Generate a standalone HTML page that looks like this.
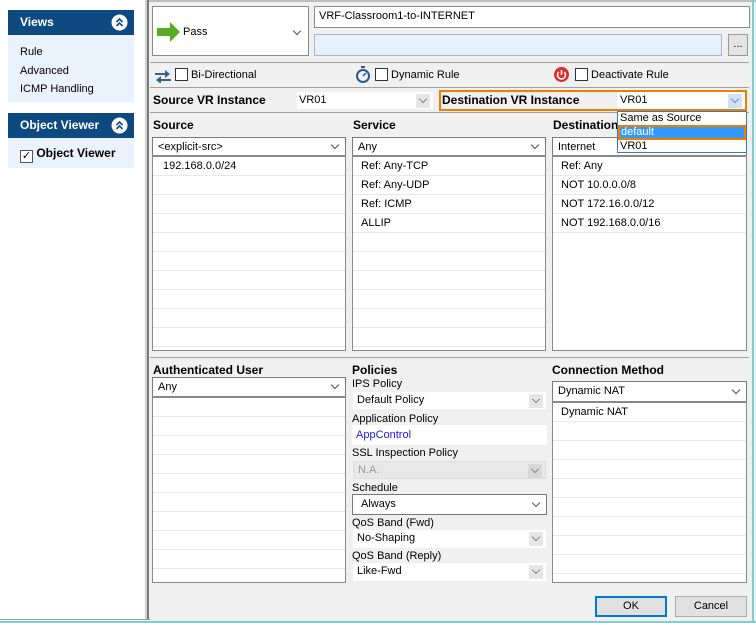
<!DOCTYPE html>
<html><head><meta charset="utf-8"><style>
*{box-sizing:border-box;margin:0;padding:0}
body{width:756px;height:623px;position:relative;overflow:hidden;background:#f0f0f0;font-family:"Liberation Sans",sans-serif;font-size:11px;color:#000}
.a{position:absolute}
.side{left:0;top:0;width:145px;height:623px;background:#fff}
.hd{background:#0e4a80;color:#fff;font-weight:bold;font-size:12px;padding-left:12px;line-height:25px}
.ci{position:absolute;right:6px;top:4px}
.bd{background:#eaf2fb}
.box{background:#fff;border:1px solid #8a8a8a}
.b{font-weight:bold;font-size:12px}
.cb{display:inline-block;width:13px;height:13px;border:1px solid #333;background:#fff;vertical-align:-3px}
.sel{background:#fff;border:1px solid #7a7a7a;padding-left:5px;line-height:17px}
.chev{position:absolute;right:7px;top:4px;width:6px;height:6px;border-right:1px solid #555;border-bottom:1px solid #555;transform:rotate(45deg)}
.list{background:#fff;border:1px solid #8a8a8a;border-top:2px solid #888;background-image:repeating-linear-gradient(#fff 0,#fff 18px,#e8e8e8 18px,#e8e8e8 19px)}
.list div{line-height:19px;padding-left:8px}
.hr{height:1px;background:#a0a0a0;left:150px;width:599px}
.lab{line-height:14px}
.fs{background:#fff;padding-left:4px;line-height:17px}
.dchev{position:absolute;right:3px;top:2px;width:14px;height:14px;background:#e6e6e6}
.dchev:after{content:"";position:absolute;left:4px;top:2px;width:5px;height:5px;border-right:1px solid #888;border-bottom:1px solid #888;transform:rotate(45deg)}
</style></head><body>
<div class="a" style="left:0;top:0;width:756px;height:2px;background:#bdbdbd"></div>
<div class="a side"></div>
<div class="a" style="left:145px;top:0;width:2px;height:620px;background:#cfcfcf"></div>
<div class="a" style="left:147px;top:0;width:2px;height:620px;background:#7a7a7a"></div>
<div class="a" style="left:8px;top:10px;width:126px"><div class="hd" style="position:relative">Views<svg class="ci" width="17" height="17"><circle cx="8.5" cy="8.5" r="8" fill="#fff"/><path d="M5.5 8l3-3 3 3M5.5 12l3-3 3 3" stroke="#0e4a80" stroke-width="1.6" fill="none"/></svg></div>
<div class="bd" style="height:67px;padding:8px 0 0 12px;line-height:18.5px">Rule<br>Advanced<br>ICMP Handling</div></div>
<div class="a" style="left:8px;top:113px;width:126px"><div class="hd" style="position:relative">Object Viewer<svg class="ci" width="17" height="17"><circle cx="8.5" cy="8.5" r="8" fill="#fff"/><path d="M5.5 8l3-3 3 3M5.5 12l3-3 3 3" stroke="#0e4a80" stroke-width="1.6" fill="none"/></svg></div>
<div class="bd" style="height:30px;padding:8px 0 0 12px;font-weight:bold;font-size:12px;line-height:14px"><span class="cb" style="border-color:#555;font-size:11px;line-height:11px;text-align:center;font-weight:normal;vertical-align:-2px">✓</span> Object Viewer</div></div>

<div class="a box" style="left:152px;top:6px;width:157px;height:50px"></div>
<svg class="a" style="left:157px;top:22px" width="24" height="20"><path d="M0 6h13V0l10 10-10 10v-6H0z" fill="#5aaa2a"/></svg>
<div class="a" style="left:183px;top:26px">Pass</div>
<div class="a chev" style="left:294px;top:28px"></div>
<div class="a box" style="left:314px;top:6px;width:436px;height:22px;padding:3px 4px">VRF-Classroom1-to-INTERNET</div>
<div class="a" style="left:314px;top:34px;width:408px;height:22px;background:#e8f0fb;border:1px solid #a8b8c8"></div>
<div class="a" style="left:728px;top:34px;width:20px;height:22px;background:#e4e4e4;border:1px solid #999;text-align:center;line-height:18px">...</div>
<div class="a hr" style="top:62px"></div>
<svg class="a" style="left:154px;top:69px" width="18" height="14"><path d="M1 4h10V1l5 4-5 4V6H1z M17 10H7V7l-5 4 5 4v-3h10z" fill="#3b5f8c"/></svg>
<div class="a" style="left:175px;top:68px"><span class="cb"></span> Bi-Directional</div>
<svg class="a" style="left:355px;top:66px" width="16" height="17"><rect x="6" y="0" width="4" height="2" fill="#2a5a8a"/><circle cx="8" cy="10" r="6" fill="none" stroke="#2a5a8a" stroke-width="2"/><path d="M8 10l3-3" stroke="#2a5a8a" stroke-width="1.5"/></svg>
<div class="a" style="left:375px;top:68px"><span class="cb"></span> Dynamic Rule</div>
<svg class="a" style="left:554px;top:67px" width="15" height="15"><circle cx="7.5" cy="7.5" r="7.5" fill="#e02b2b"/><path d="M4.8 5a4 4 0 1 0 5.4 0" stroke="#fff" stroke-width="1.6" fill="none"/><path d="M7.5 3v5" stroke="#fff" stroke-width="1.6"/></svg>
<div class="a" style="left:575px;top:68px"><span class="cb"></span> Deactivate Rule</div>
<div class="a hr" style="top:87px"></div>
<div class="a b" style="left:153px;top:93px">Source VR Instance</div>
<div class="a" style="left:297px;top:92px;width:136px;height:17px;background:#fff;padding-left:2px;line-height:17px">VR01<span class="dchev"></span></div>
<div class="a" style="left:439px;top:90px;width:308px;height:21px;border:2px solid #f07d00"></div>
<div class="a b" style="left:442px;top:93px">Destination VR Instance</div>
<div class="a" style="left:617px;top:92px;width:128px;height:17px;background:#fff;padding-left:3px;line-height:17px">VR01<span class="dchev" style="background:#cfe3f7"></span></div>
<div class="a hr" style="top:112px"></div>

<div class="a b" style="left:153px;top:118px">Source</div>
<div class="a b" style="left:353px;top:118px">Service</div>
<div class="a b" style="left:553px;top:118px">Destination</div>
<div class="a sel" style="left:152px;top:137px;width:194px;height:19px;line-height:18px">&lt;explicit-src&gt;<span class="chev"></span></div>
<div class="a list" style="left:152px;top:155px;width:194px;height:196px"><div style="padding-left:10px">192.168.0.0/24</div></div>
<div class="a sel" style="left:352px;top:137px;width:194px;height:19px;line-height:18px">Any<span class="chev"></span></div>
<div class="a list" style="left:352px;top:155px;width:194px;height:196px"><div>Ref: Any-TCP</div><div>Ref: Any-UDP</div><div>Ref: ICMP</div><div>ALLIP</div></div>
<div class="a sel" style="left:552px;top:137px;width:195px;height:19px;line-height:18px">Internet</div>
<div class="a list" style="left:552px;top:155px;width:195px;height:196px;background-size:100% 76px;background-repeat:no-repeat"><div>Ref: Any</div><div>NOT 10.0.0.0/8</div><div>NOT 172.16.0.0/12</div><div>NOT 192.168.0.0/16</div></div>

<div class="a" style="left:617px;top:111px;width:130px;height:42px;background:#fff;border:1px solid #3a78c0;line-height:13px">
<div style="padding-left:2px">Same as Source</div>
<div style="background:#3399ff;color:#fff;border:2px solid #f07d00;padding-left:1px;line-height:11px;height:15px">default</div>
<div style="padding-left:2px">VR01</div></div>

<div class="a hr" style="top:357px"></div>
<div class="a b" style="left:153px;top:363px">Authenticated User</div>
<div class="a sel" style="left:152px;top:377px;width:194px;height:20px;line-height:19px">Any<span class="chev"></span></div>
<div class="a list" style="left:152px;top:396px;width:194px;height:187px"></div>

<div class="a b" style="left:352px;top:363px">Policies</div>
<div class="a lab" style="left:352px;top:377px">IPS Policy</div>
<div class="a fs" style="left:353px;top:392px;width:193px;height:17px">Default Policy<span class="dchev"></span></div>
<div class="a lab" style="left:352px;top:412px">Application Policy</div>
<div class="a fs" style="left:352px;top:425px;width:195px;height:20px;color:#1a1aee;line-height:20px">AppControl</div>
<div class="a lab" style="left:352px;top:446px">SSL Inspection Policy</div>
<div class="a fs" style="left:353px;top:461px;width:193px;height:18px;background:#e8e8e8;color:#999;border:1px solid #ddd">N.A.<span class="dchev" style="background:#d8d8d8"></span></div>
<div class="a lab" style="left:352px;top:481px">Schedule</div>
<div class="a" style="left:352px;top:494px;width:195px;height:21px;background:#fff;border:1px solid #777;padding-left:8px;line-height:19px">Always<span class="chev" style="top:5px"></span></div>
<div class="a lab" style="left:352px;top:516px">QoS Band (Fwd)</div>
<div class="a fs" style="left:353px;top:530px;width:193px;height:18px">No-Shaping<span class="dchev"></span></div>
<div class="a lab" style="left:352px;top:549px">QoS Band (Reply)</div>
<div class="a fs" style="left:353px;top:563px;width:193px;height:18px">Like-Fwd<span class="dchev"></span></div>

<div class="a b" style="left:552px;top:363px">Connection Method</div>
<div class="a sel" style="left:552px;top:381px;width:195px;height:21px;line-height:19px">Dynamic NAT<span class="chev" style="top:5px"></span></div>
<div class="a list" style="left:552px;top:401px;width:195px;height:182px"><div>Dynamic NAT</div></div>

<div class="a" style="left:595px;top:596px;width:72px;height:21px;background:#e1e1e1;border:2px solid #0078d7;text-align:center;line-height:17px">OK</div>
<div class="a" style="left:675px;top:596px;width:72px;height:21px;background:#e1e1e1;border:1px solid #adadad;text-align:center;line-height:19px">Cancel</div>
<div class="a" style="left:752px;top:0;width:2px;height:623px;background:#7fcfcf"></div>
<div class="a" style="left:0;top:619px;width:150px;height:1px;background:#999"></div>
<div class="a" style="left:0;top:621px;width:756px;height:2px;background:#7fcfcf"></div>
</body></html>
